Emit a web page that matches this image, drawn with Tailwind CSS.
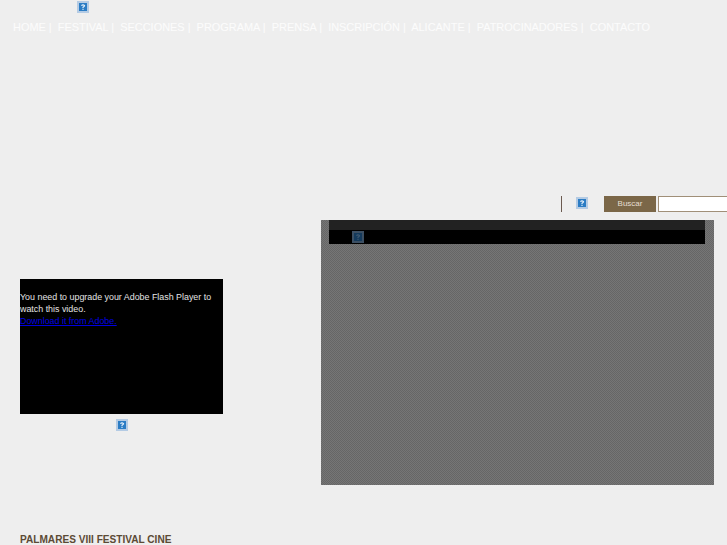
<!DOCTYPE html>
<html lang="en">
<head>
  <meta charset="UTF-8">
  <meta name="viewport" content="width=device-width, initial-scale=1.0">
  <script src="https://cdn.jsdelivr.net/npm/@tailwindcss/browser@4"></script>
  <title>Festival Cine Alicante</title>
</head>
<body class="h-[545px] overflow-hidden bg-[#eeeeee] font-['Liberation_Sans',Arial,sans-serif]">
  <!-- Top broken image -->
  <div class="pl-[77px] pt-px h-[20px]">
    <svg class="block" width="12" height="12" viewBox="0 0 12 12"><rect width="12" height="12" fill="#b4cbe4"/><rect x="2" y="2" width="8" height="8" fill="#2b7cc4"/><path d="M4.4 4.6 Q6 3 7.6 4.6 Q7.6 5.6 6 6.2 V7.2 M6 8 V9" fill="none" stroke="#e8f2fb" stroke-width="1.1"/></svg>
  </div>

  <!-- Nav -->
  <nav class="pl-[13px] h-[14px] text-[10.95px] leading-[14px] text-white/80 whitespace-nowrap">
    <a href="#">HOME</a> |&nbsp; <a href="#">FESTIVAL</a> |&nbsp; <a href="#">SECCIONES</a> |&nbsp; <a href="#">PROGRAMA</a> |&nbsp; <a href="#">PRENSA</a> |&nbsp; <a href="#">INSCRIPCIÓN</a> |&nbsp; <a href="#">ALICANTE</a> |&nbsp; <a href="#">PATROCINADORES</a> |&nbsp; <a href="#">CONTACTO</a>
  </nav>

  <!-- Search -->
  <div class="mt-[162px] pl-[561px] flex items-start h-[16px] w-[727px] overflow-hidden">
    <div class="w-px h-[16px] shrink-0 bg-[#6b5a50]"></div>
    <svg class="block shrink-0 mt-px ml-[14px] mr-[16px]" width="12" height="12" viewBox="0 0 12 12"><rect width="12" height="12" fill="#b4cbe4"/><rect x="2" y="2" width="8" height="8" fill="#2b7cc4"/><path d="M4.4 4.6 Q6 3 7.6 4.6 Q7.6 5.6 6 6.2 V7.2 M6 8 V9" fill="none" stroke="#e8f2fb" stroke-width="1.1"/></svg>
    <button class="w-[52px] h-[16px] shrink-0 bg-[#7b6748] text-[#e6dfd2] text-[8px] leading-[16px] text-center">Buscar</button>
    <input type="text" class="ml-[2px] w-[120px] h-[16px] shrink-0 bg-white border border-[#a08f78]">
  </div>

  <!-- Main columns -->
  <div class="mt-[8px] flex">
    <div class="w-[321px] shrink-0 pl-[20px] pt-[59px]">
      <div class="w-[203px] h-[135px] bg-black pt-[12px] text-[8.9px] leading-[12px] text-[#e4e4e4]">
        <p class="w-[195px]">You need to upgrade your Adobe Flash Player to watch this video.</p>
        <a href="#" class="text-[#0000e0] underline">Download it from Adobe.</a>
      </div>
      <div class="w-[203px] mt-[5px] flex justify-center">
        <svg class="block" width="12" height="12" viewBox="0 0 12 12"><rect width="12" height="12" fill="#b4cbe4"/><rect x="2" y="2" width="8" height="8" fill="#2b7cc4"/><path d="M4.4 4.6 Q6 3 7.6 4.6 Q7.6 5.6 6 6.2 V7.2 M6 8 V9" fill="none" stroke="#e8f2fb" stroke-width="1.1"/></svg>
      </div>
    </div>
    <div class="w-[393px] h-[265px] bg-[repeating-conic-gradient(#666666_0_25%,#767676_0_50%)] bg-[length:2px_2px] px-[8px]">
      <div class="w-[376px] h-[24px] bg-black">
        <div class="h-[10px] bg-[#222222]"></div>
        <div class="pl-[23px] pt-[1px]">
          <svg class="block" width="12" height="12" viewBox="0 0 12 12"><rect width="12" height="12" fill="#3c4f63"/><rect x="2" y="2" width="8" height="8" fill="#143a5c"/><path d="M4.4 4.6 Q6 3 7.6 4.6 Q7.6 5.6 6 6.2 V7.2 M6 8 V9" fill="none" stroke="#405a72" stroke-width="1.1"/></svg>
        </div>
      </div>
    </div>
  </div>

  <h2 class="mt-[48px] pl-[20px] text-[10.1px] leading-[14px] font-bold text-[#5c4a35]">PALMARES VIII FESTIVAL CINE</h2>
</body>
</html>
